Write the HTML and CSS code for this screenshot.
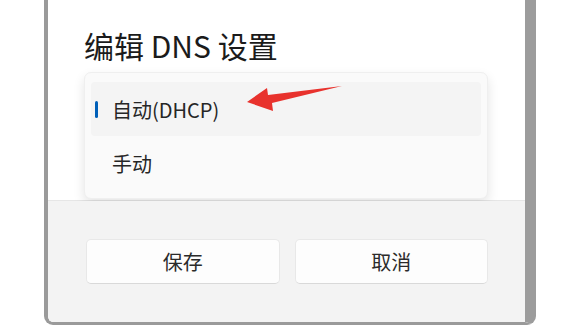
FILE: index.html
```html
<!DOCTYPE html>
<html lang="zh-CN">
<head>
    <meta charset="UTF-8">
    <meta name="viewport" content="width=device-width, initial-scale=1.0">
    <title>编辑 DNS 设置</title>
    <link rel="stylesheet" href="styles.css">
</head>
<body>
    <div class="dialog">
        <div class="content">
            <h1>编辑 DNS 设置</h1>
            <ul class="menu">
                <li class="menu-item selected">自动(DHCP)</li>
                <li class="menu-item">手动</li>
            </ul>
        </div>
        <div class="footer">
            <button class="btn">保存</button>
            <button class="btn">取消</button>
        </div>
    </div>

    <!-- annotation arrow drawn over the menu -->
    <svg class="arrow" width="587" height="325" viewBox="0 0 587 325">
        <polygon points="247,102 267,88 268,95 342,86 272,103 273,111" fill="#e8322d"/>
    </svg>
</body>
</html>
```

FILE: styles.css
```css
body {
    margin: 0;
    height: 325px;
    overflow: hidden;
    background-color: #ffffff;
    font-family: "Noto Sans CJK SC", "Noto Sans", sans-serif;
    color: #1b1b1b;
    padding-left: 44px;
    position: relative;
}

.dialog {
    width: 492px;
    height: 325px;
    box-sizing: border-box;
    border-left: 4px solid #9a9a9a;
    border-right: 11px solid #9c9c9c;
    border-bottom: 3px solid #9a9a9a;
    border-radius: 0 0 9px 9px;
    overflow: hidden;
    display: flex;
    flex-direction: column;
}

.content {
    background-color: #ffffff;
    height: 201px;
    box-sizing: border-box;
    padding: 25px 37px 0 36px;
    border-bottom: 1px solid #e6e6e6;
}

h1 {
    margin: 0;
    font-size: 30px;
    line-height: 40px;
    font-weight: 400;
}

.menu {
    list-style: none;
    margin: 7px 0 0 0;
    padding: 9px 6px 10px 6px;
    background-color: #fafafa;
    border: 1px solid #efefef;
    border-radius: 7px;
    box-shadow: 0 5px 12px rgba(0, 0, 0, 0.11);
    height: 127px;
    box-sizing: border-box;
}

.menu-item {
    height: 54px;
    display: flex;
    align-items: center;
    padding-left: 21px;
    font-size: 20px;
    color: #262626;
    border-radius: 4px;
    position: relative;
}

.selected {
    background-color: #f4f4f4;
}

.selected::before {
    content: "";
    position: absolute;
    left: 4px;
    top: 19px;
    width: 3px;
    height: 17px;
    border-radius: 2px;
    background-color: #005fb8;
}

.footer {
    flex: 1;
    background-color: #f3f3f3;
    display: grid;
    grid-template-columns: 1fr 1fr;
    column-gap: 15px;
    align-items: start;
    padding: 38px 37px 0 38px;
}

.btn {
    height: 45px;
    background-color: #fdfdfd;
    border: 1px solid #e8e8e8;
    border-bottom-color: #d9d9d9;
    border-radius: 5px;
    font-family: "Noto Sans CJK SC", "Noto Sans", sans-serif;
    font-size: 20px;
    color: #2b2b2b;
}

.arrow {
    position: absolute;
    left: 0;
    top: 0;
    pointer-events: none;
}
```
